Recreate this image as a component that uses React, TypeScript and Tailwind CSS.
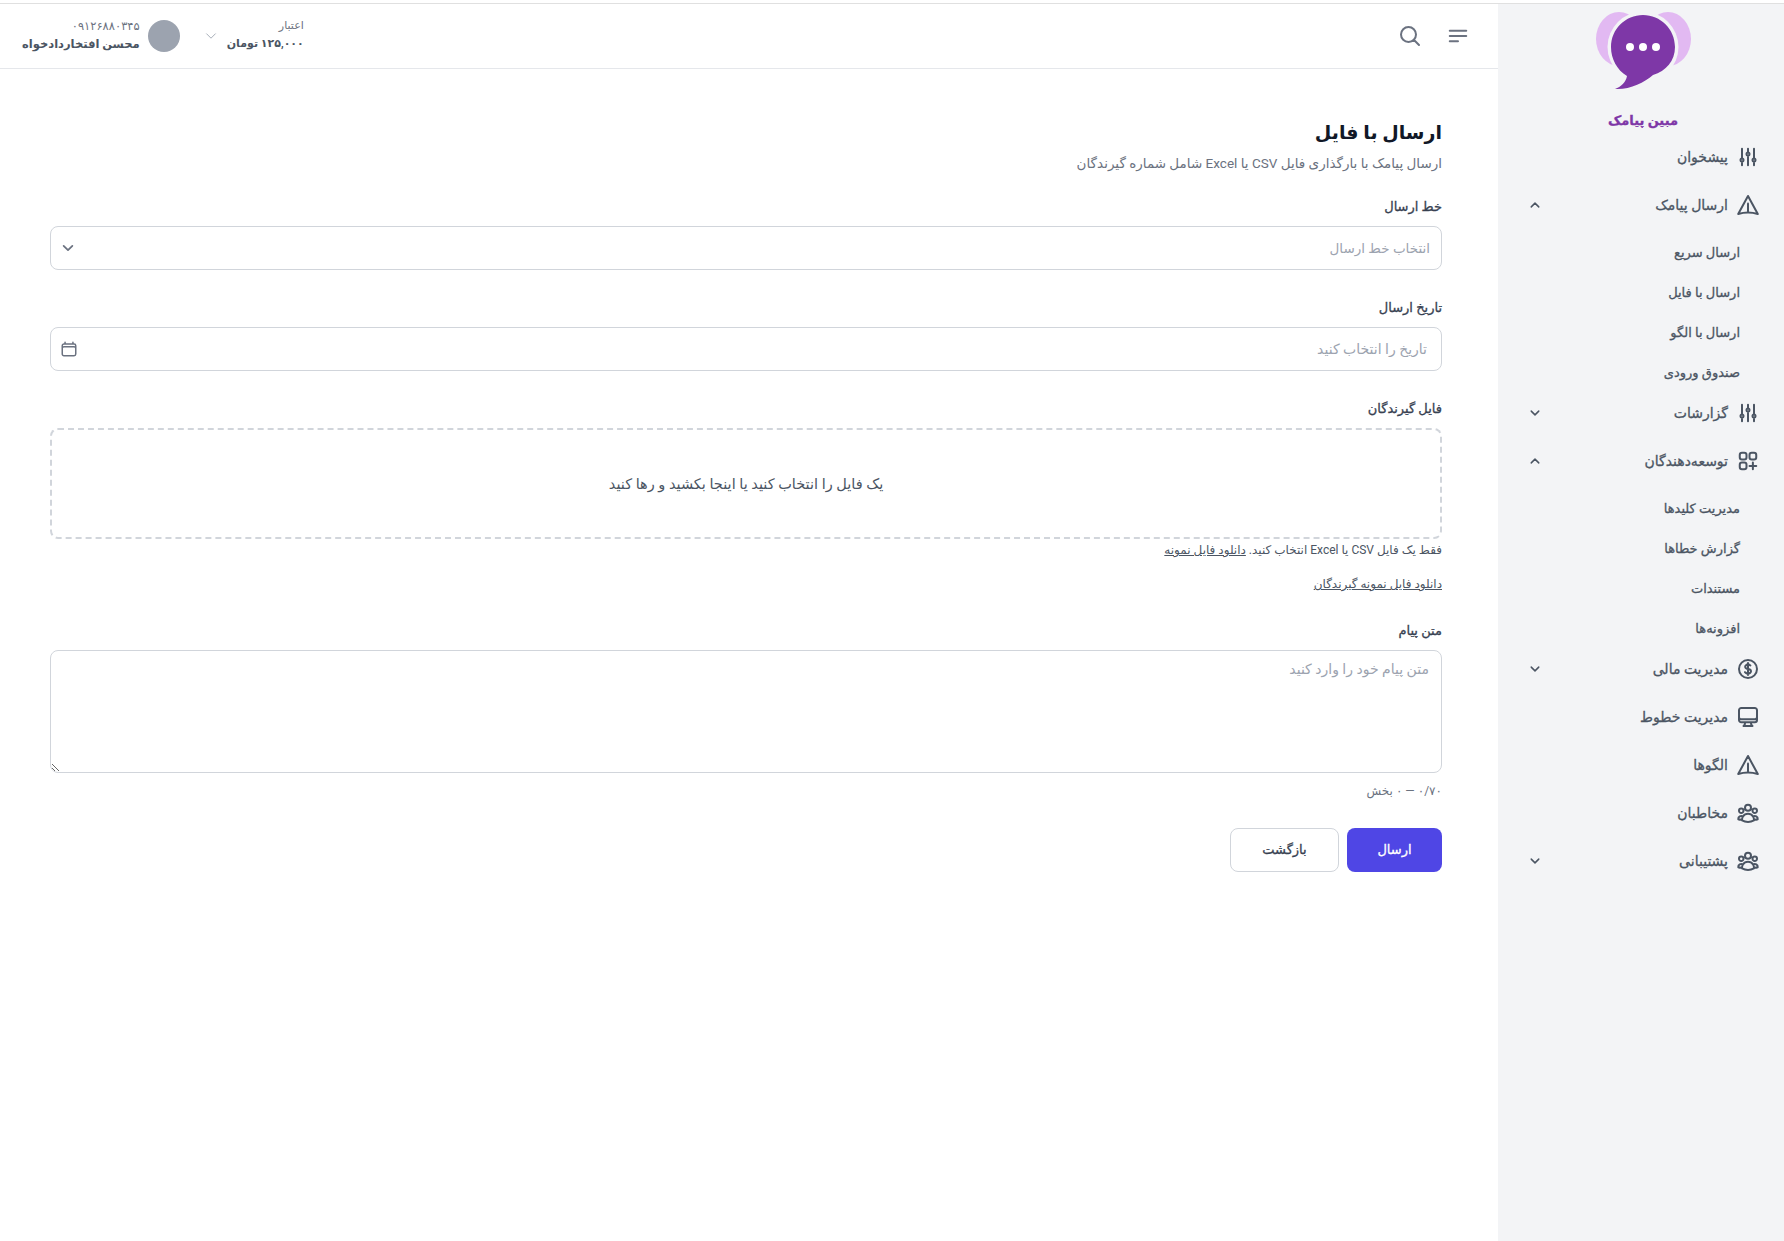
import {
  HiOutlineAdjustmentsVertical,
  HiOutlineBars3BottomLeft,
  HiOutlineCalendar,
  HiOutlineChevronDown,
  HiOutlineChevronUp,
  HiOutlineComputerDesktop,
  HiOutlineCurrencyDollar,
  HiOutlineMagnifyingGlass,
  HiOutlineSquaresPlus,
  HiOutlineUserGroup,
} from 'react-icons/hi2';

const SendIcon = ({ className, strokeWidth }: { className?: string; strokeWidth?: number }) => (
  <svg viewBox="0 0 24 24" fill="none" stroke="currentColor" strokeWidth={strokeWidth} strokeLinejoin="round" strokeLinecap="round" className={className}>
    <path d="M12 3 L21.800 21 Q12 18 2.200 21 Z" />
    <path d="M12 18.500 V10.500" />
  </svg>
);

const menu = [
  { label: 'پیشخوان', icon: HiOutlineAdjustmentsVertical },
  {
    label: 'ارسال پیامک',
    icon: SendIcon,
    open: true,
    children: ['ارسال سریع', 'ارسال با فایل', 'ارسال با الگو', 'صندوق ورودی'],
  },
  { label: 'گزارشات', icon: HiOutlineAdjustmentsVertical, closed: true },
  {
    label: 'توسعه‌دهندگان',
    icon: HiOutlineSquaresPlus,
    open: true,
    children: ['مدیریت کلیدها', 'گزارش خطاها', 'مستندات', 'افزونه‌ها'],
  },
  { label: 'مدیریت مالی', icon: HiOutlineCurrencyDollar, closed: true },
  { label: 'مدیریت خطوط', icon: HiOutlineComputerDesktop },
  { label: 'الگوها', icon: SendIcon },
  { label: 'مخاطبان', icon: HiOutlineUserGroup },
  { label: 'پشتیبانی', icon: HiOutlineUserGroup, closed: true },
];

const Logo = () => (
  <svg width="97" height="80" viewBox="0 0 97 80">
    <ellipse cx="24" cy="28" rx="23" ry="27" fill="#e2b9f2" />
    <ellipse cx="73" cy="28" rx="23" ry="27" fill="#e2b9f2" />
    <circle cx="48" cy="36" r="35.500" fill="#f3f4f6" />
    <path
      d="M48 4c17.500 0 32 14 32 32 0 14-9 24-22 28-9 8-24 15-38 14 6-2 11-7 12-13C22 59 16 48 16 36 16 18 30.500 4 48 4Z"
      fill="#7e37a7"
    />
    <circle cx="35" cy="36" r="4" fill="#fff" />
    <circle cx="48" cy="36" r="4" fill="#fff" />
    <circle cx="61" cy="36" r="4" fill="#fff" />
  </svg>
);

const Sidebar = () => (
  <aside className="w-[286px] shrink-0 bg-[#f3f4f6]">
    <div className="flex flex-col items-center pt-[7px] pl-[4px]">
      <Logo />
      <div className="mt-[20px] text-[13px] leading-5 font-bold text-[#7e37a7] [-webkit-text-stroke:0.3px]">مبین پیامک</div>
    </div>
    <nav className="pt-[2px] pr-[24px] pl-[31px]">
      {menu.map((item) => (
        <div key={item.label}>
          <div className="flex h-12 items-center gap-2 text-[14px] text-[#4b5563] [-webkit-text-stroke:0.3px]">
            <item.icon className="h-6 w-6 shrink-0 text-[#4b5563]" strokeWidth={2} />
            <span className="flex-1">{item.label}</span>
            {item.open && <HiOutlineChevronUp className="h-3 w-3" strokeWidth={3} />}
            {item.closed && <HiOutlineChevronDown className="h-3 w-3" strokeWidth={3} />}
          </div>
          {item.children && (
            <div className="mb-[-4px] pt-[4px]">
              {item.children.map((child) => (
                <div key={child} className="flex h-10 items-center pr-[20px] text-[13px] text-[#4b5563] [-webkit-text-stroke:0.3px]">
                  {child}
                </div>
              ))}
            </div>
          )}
        </div>
      ))}
    </nav>
  </aside>
);

const Header = () => (
  <header className="flex h-[65px] items-center justify-between border-b border-[#e5e7eb] pr-[28px] pl-[22px]">
    <div className="flex items-center gap-[24px] text-[#6b7280]">
      <HiOutlineBars3BottomLeft className="h-6 w-6" strokeWidth={2} />
      <HiOutlineMagnifyingGlass className="h-6 w-6" strokeWidth={2} />
    </div>
    <div className="flex items-center gap-[24px] text-[#4b5563]">
      <div className="flex items-center gap-[9px]">
        <div className="text-right">
          <div className="text-[11px] leading-4 text-[#6b7280]">اعتبار</div>
          <div className="text-[11px] leading-5 font-bold">۱۲۵,۰۰۰ تومان</div>
        </div>
        <HiOutlineChevronDown className="h-3.5 w-3.5 text-[#9ca3af]" />
      </div>
      <div className="flex items-center gap-2">
        <div className="h-8 w-8 rounded-full bg-[#9ca3af]" />
        <div>
          <div className="text-[11.5px] leading-4 text-[#6b7280]">۰۹۱۲۶۸۸۰۳۴۵</div>
          <div className="text-[11.5px] leading-5 font-bold">محسن افتخاردادخواه</div>
        </div>
      </div>
    </div>
  </header>
);

const Label = ({ children }: { children: string }) => (
  <label className="mb-[9px] block text-[13px] leading-5 text-[#374151] [-webkit-text-stroke:0.3px]">{children}</label>
);

const SendForm = () => (
  <div className="pt-[48px] pr-[56px] pl-[50px]">
    <h1 className="text-[19px] leading-8 font-bold text-[#111827]">ارسال با فایل</h1>
    <p className="mt-[4px] text-[13.500px] leading-5 text-[#6b7280]">ارسال پیامک با بارگذاری فایل CSV یا Excel شامل شماره گیرندگان</p>

    <div className="mt-[24px]">
      <Label>خط ارسال</Label>
      <div className="flex h-11 items-center justify-between rounded-lg border border-[#d1d5db] pr-[11px] pl-[10px] text-[13.500px] text-[#9ca3af]">
        <span>انتخاب خط ارسال</span>
        <HiOutlineChevronDown className="h-3.5 w-3.5 text-[#6b7280]" strokeWidth={3} />
      </div>
    </div>

    <div className="mt-[28px]">
      <Label>تاریخ ارسال</Label>
      <div className="flex h-11 items-center rounded-lg border border-[#d1d5db] pr-[14px] pl-[9px]">
        <input
          className="w-full text-[14px] outline-none placeholder:text-[#9ca3af]"
          placeholder="تاریخ را انتخاب کنید"
        />
        <HiOutlineCalendar className="h-[18px] w-[18px] shrink-0 text-[#6b7280]" strokeWidth={2} />
      </div>
    </div>

    <div className="mt-[28px]">
      <Label>فایل گیرندگان</Label>
      <div className="flex h-[111px] items-center justify-center rounded-lg border-2 border-dashed border-[#d1d5db] pt-[2px] text-[14.500px] text-[#4b5563]">
        یک فایل را انتخاب کنید یا اینجا بکشید و رها کنید
      </div>
      <p className="mt-[3px] text-[12px] leading-4 text-[#4b5563]">
        فقط یک فایل CSV یا Excel انتخاب کنید. <a className="underline">دانلود فایل نمونه</a>
      </p>
      <a className="mt-[18px] block text-[12px] leading-4 text-[#4b5563] underline">دانلود فایل نمونه گیرندگان</a>
    </div>

    <div className="mt-[29px]">
      <Label>متن پیام</Label>
      <textarea
        className="block h-[123px] w-full rounded-lg border border-[#d1d5db] px-[12px] py-[8px] text-[14px] outline-none placeholder:text-[#9ca3af]"
        placeholder="متن پیام خود را وارد کنید"
      />
      <div className="mt-[10px] text-[12px] leading-4 text-[#6b7280]">۰/۷۰ — ۰ بخش</div>
    </div>

    <div className="mt-[29px] flex gap-2">
      <button className="h-11 w-[95px] rounded-lg bg-[#4f46e5] text-[13px] text-white [-webkit-text-stroke:0.3px]">ارسال</button>
      <button className="h-11 w-[109px] rounded-lg border border-[#d1d5db] bg-white text-[13px] text-[#374151] [-webkit-text-stroke:0.3px]">
        بازگشت
      </button>
    </div>
  </div>
);

export default function App() {
  return (
    <div dir="rtl" className="flex min-h-screen flex-col bg-white font-['Roboto','DejaVu_Sans',sans-serif]">
      <div className="h-[4px] shrink-0 border-b border-[#e0e0e0] bg-white" />
      <div className="flex flex-1">
        <Sidebar />
        <main className="min-w-0 flex-1">
          <Header />
          <SendForm />
        </main>
      </div>
    </div>
  );
}
